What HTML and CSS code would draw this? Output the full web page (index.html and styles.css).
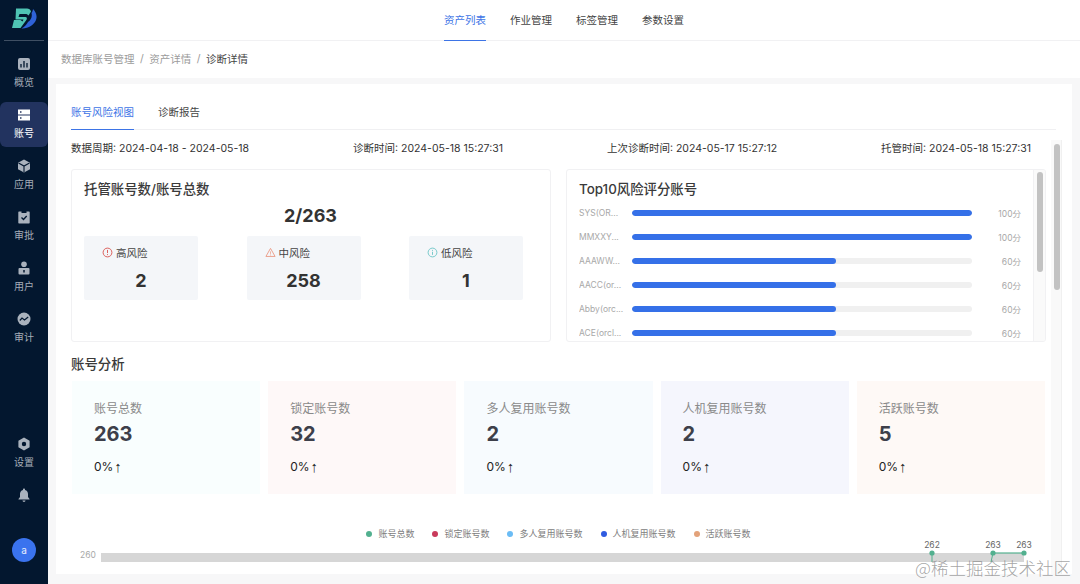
FILE: index.html
```html
<!DOCTYPE html>
<html lang="zh">
<head>
<meta charset="utf-8">
<title>诊断详情</title>
<link rel="stylesheet" href="styles.css">
</head>
<body>
<div class="app">
  <aside class="side">
    <div class="logo">
      <svg width="26" height="24" viewBox="0 0 26 24">
        <path d="M5 1.500H16C18 1.500 19.500 2.500 20 4.500L17.500 8.500C16.500 7.500 16 7 14.500 7H8.500L7.500 10H14.500C16 10 16.500 12 15 13.500L9.500 21H1L3 13H9.500L11.500 14.500L12.500 12.500H4.500Z" fill="#4fc4b4"/>
        <path d="M20.500 6C21.500 4.500 22 3 22 2C25 5 26.500 9 25 13C23 18 17 22 10.500 21.500C14 19.500 16 17 17 15C20 13 21.500 9.500 20.500 6Z" fill="#2f62d8"/>
      </svg>
    </div>
    <nav class="side-nav">
      <a class="side-item">
        <svg class="si" viewBox="0 0 14 14"><rect x="1" y="1" width="12" height="12" rx="2" fill="#aab2bd"/><path d="M4 7v3.500M7 4v6.500M10 6v4.500" stroke="#03172f" stroke-width="1.300"/></svg>
        <span>概览</span>
      </a>
      <a class="side-item active">
        <svg class="si" viewBox="0 0 14 14"><path d="M1 1.500h12v5H1zM1 7.500h12v5H1z" fill="#fff"/><path d="M3 4h1.500M3 10h1.500" stroke="#26365f" stroke-width="1.400"/></svg>
        <span>账号</span>
      </a>
      <a class="side-item">
        <svg class="si" viewBox="0 0 14 14"><path d="M7 .5l6 3.300v6.400L7 13.500 1 10.200V3.800z" fill="#aab2bd"/><path d="M1.500 4L7 7l5.500-3M7 7v6" stroke="#03172f" stroke-width="1.100" fill="none"/></svg>
        <span>应用</span>
      </a>
      <a class="side-item">
        <svg class="si" viewBox="0 0 14 14"><path d="M2 1.500h2.500V3h5V1.500H12a.7.7 0 0 1 .7.7v10.600a.7.7 0 0 1-.7.7H2a.7.7 0 0 1-.7-.7V2.200a.7.7 0 0 1 .7-.7z" fill="#aab2bd"/><path d="M4.500 7.500l2 2 3.200-3.500" stroke="#03172f" stroke-width="1.300" fill="none"/></svg>
        <span>审批</span>
      </a>
      <a class="side-item">
        <svg class="si" viewBox="0 0 14 14"><circle cx="7" cy="3.300" r="2.800" fill="#aab2bd"/><rect x="1.500" y="7" width="11" height="6.500" rx="1" fill="#aab2bd"/><path d="M7 9v2.500" stroke="#03172f" stroke-width="1.500"/></svg>
        <span>用户</span>
      </a>
      <a class="side-item">
        <svg class="si" viewBox="0 0 14 14"><circle cx="7" cy="7" r="6.500" fill="#aab2bd"/><path d="M2.800 8.500L5 6l2.500 2L11.200 5" stroke="#03172f" stroke-width="1.200" fill="none"/></svg>
        <span>审计</span>
      </a>
    </nav>
    <div class="side-foot">
      <a class="side-item">
        <svg class="si" viewBox="0 0 14 14"><path fill-rule="evenodd" d="M7 .5l5.600 3.200v6.600L7 13.500l-5.600-3.200V3.700zM7 4.800a2.200 2.200 0 1 0 0 4.400 2.200 2.200 0 0 0 0-4.400z" fill="#aab2bd"/></svg>
        <span>设置</span>
      </a>
      <svg class="bell" viewBox="0 0 14 14"><path d="M7 .5c.6 0 1 .4 1 1v.4c2 .5 3 2.200 3 4.100v3l1.500 2v.5h-11V11L3 9V6c0-1.900 1-3.600 3-4.100v-.4c0-.6.4-1 1-1zM5.500 12.600h3C8.500 13.400 7.800 14 7 14s-1.500-.6-1.500-1.400z" fill="#aab2bd"/></svg>
      <div class="avatar">a</div>
    </div>
  </aside>

  <div class="main">
    <header class="topnav">
      <a class="top-link current">资产列表</a>
      <a class="top-link">作业管理</a>
      <a class="top-link">标签管理</a>
      <a class="top-link">参数设置</a>
    </header>
    <div class="crumbs">
      <span class="crumb">数据库账号管理</span><i class="sep">/</i>
      <span class="crumb">资产详情</span><i class="sep">/</i>
      <span class="crumb last">诊断详情</span>
    </div>
    <div class="page">
      <section class="panel">
        <div class="tabs">
          <a class="tab current">账号风险视图</a>
          <a class="tab">诊断报告</a>
        </div>
        <div class="info">
          <span>数据周期: 2024-04-18 - 2024-05-18</span>
          <span>诊断时间: 2024-05-18 15:27:31</span>
          <span>上次诊断时间: 2024-05-17 15:27:12</span>
          <span>托管时间: 2024-05-18 15:27:31</span>
        </div>
        <div class="cards">
          <div class="card">
            <h3 class="card-title">托管账号数/账号总数</h3>
            <div class="ratio">2/263</div>
            <div class="risks">
              <div class="risk">
                <div class="risk-label">
                  <svg class="ri" viewBox="0 0 12 12"><circle cx="6" cy="6" r="4.800" fill="none" stroke="#d9534f"/><path d="M6 3.200v3.400M6 7.800v1" stroke="#d9534f"/></svg>高风险
                </div>
                <div class="risk-num">2</div>
              </div>
              <div class="risk">
                <div class="risk-label">
                  <svg class="ri" viewBox="0 0 12 12"><path d="M6 1.500l5 8.800H1z" fill="none" stroke="#ea9a85"/><path d="M6 4.800v2.700M6 8.200v1" stroke="#ea9a85" stroke-width=".8"/></svg>中风险
                </div>
                <div class="risk-num">258</div>
              </div>
              <div class="risk">
                <div class="risk-label">
                  <svg class="ri" viewBox="0 0 12 12"><circle cx="6" cy="6" r="4.800" fill="none" stroke="#6cc5c6"/><path d="M6 3.200v1M6 5.200v3.400" stroke="#6cc5c6"/></svg>低风险
                </div>
                <div class="risk-num">1</div>
              </div>
            </div>
          </div>
          <div class="card top-card">
            <h3 class="card-title">Top10风险评分账号</h3>
            <div class="rows">
              <div class="row"><span class="row-name">SYS(OR...</span><div class="track"><div class="fill" style="width:100%"></div></div><span class="row-val">100分</span></div>
              <div class="row"><span class="row-name">MMXXY...</span><div class="track"><div class="fill" style="width:100%"></div></div><span class="row-val">100分</span></div>
              <div class="row"><span class="row-name">AAAWW...</span><div class="track"><div class="fill" style="width:60%"></div></div><span class="row-val">60分</span></div>
              <div class="row"><span class="row-name">AACC(or...</span><div class="track"><div class="fill" style="width:60%"></div></div><span class="row-val">60分</span></div>
              <div class="row"><span class="row-name">Abby(orc...</span><div class="track"><div class="fill" style="width:60%"></div></div><span class="row-val">60分</span></div>
              <div class="row"><span class="row-name">ACE(orcl...</span><div class="track"><div class="fill" style="width:60%"></div></div><span class="row-val">60分</span></div>
            </div>
            <div class="inner-scroll"><div class="inner-thumb"></div></div>
          </div>
        </div>
        <h3 class="section-title">账号分析</h3>
        <div class="tiles">
          <div class="tile t1"><div class="tile-label">账号总数</div><div class="tile-num">263</div><div class="tile-rate">0%<span class="arrow">↑</span></div></div>
          <div class="tile t2"><div class="tile-label">锁定账号数</div><div class="tile-num">32</div><div class="tile-rate">0%<span class="arrow">↑</span></div></div>
          <div class="tile t3"><div class="tile-label">多人复用账号数</div><div class="tile-num">2</div><div class="tile-rate">0%<span class="arrow">↑</span></div></div>
          <div class="tile t4"><div class="tile-label">人机复用账号数</div><div class="tile-num">2</div><div class="tile-rate">0%<span class="arrow">↑</span></div></div>
          <div class="tile t5"><div class="tile-label">活跃账号数</div><div class="tile-num">5</div><div class="tile-rate">0%<span class="arrow">↑</span></div></div>
        </div>
        <div class="legend">
          <span class="lg"><i class="dot d1"></i>账号总数</span>
          <span class="lg"><i class="dot d2"></i>锁定账号数</span>
          <span class="lg"><i class="dot d3"></i>多人复用账号数</span>
          <span class="lg"><i class="dot d4"></i>人机复用账号数</span>
          <span class="lg"><i class="dot d5"></i>活跃账号数</span>
        </div>
        <svg class="chart" width="975" height="36" viewBox="71 538 975 36">
          <rect x="101" y="553" width="923" height="9" fill="#d6d6d6"/>
          <text x="80" y="558" class="axis">260</text>
          <path d="M993 553H1024" stroke="#52b08f" stroke-width="1.200"/>
          <path d="M932 553V562M993 553L991 562" stroke="#52b08f" stroke-width="1"/>
          <circle cx="932" cy="553" r="2.600" fill="#52b08f"/>
          <circle cx="993" cy="553" r="2.600" fill="#52b08f"/>
          <circle cx="1024" cy="553" r="2.600" fill="#52b08f"/>
          <text x="932" y="548" class="pt">262</text>
          <text x="993" y="548" class="pt">263</text>
          <text x="1024" y="548" class="pt">263</text>
        </svg>
        <div class="page-scroll"><div class="page-thumb"></div></div>
      </section>
    </div>
  </div>
</div>
<div class="watermark">@稀土掘金技术社区</div>
</body>
</html>
```

FILE: styles.css
```css
* { box-sizing: border-box; }
html, body { margin: 0; height: 100%; overflow: hidden; }
body {
  font-family: "Inter", "Noto Sans CJK SC", sans-serif;
  font-size: 10.5px;
  color: #333;
  background: #f7f7f8;
}
.app { display: flex; width: 1080px; height: 584px; }

/* sidebar */
.side {
  width: 48px;
  flex: none;
  background: #03172f;
  display: flex;
  flex-direction: column;
  align-items: center;
}
.logo {
  width: 40px;
  height: 41px;
  border-bottom: 1px solid #3f4f63;
  display: flex;
  align-items: flex-start;
  justify-content: center;
  padding-top: 7px;
}
.side-nav { display: flex; flex-direction: column; gap: 6px; padding-top: 10px; width: 100%; }
.side-item {
  height: 45px;
  width: 100%;
  padding-bottom: 2px;
  display: flex;
  flex-direction: column;
  align-items: center;
  justify-content: center;
  gap: 4px;
  color: #a5adb8;
  font-size: 10px;
  line-height: 14px;
  border-radius: 6px;
}
.side-item.active { background: #22335f; color: #fff; }
.si { width: 14px; height: 14px; display: block; }
.side-foot {
  margin-top: auto;
  width: 100%;
  display: flex;
  flex-direction: column;
  align-items: center;
  padding-bottom: 22px;
}
.bell { width: 14px; height: 14px; display: block; margin-top: 12px; }
.avatar {
  width: 24px;
  height: 24px;
  margin-top: 36px;
  border-radius: 50%;
  background: #3a73ee;
  color: #e8eefc;
  font-size: 10px;
  display: flex;
  align-items: center;
  justify-content: center;
}

/* top */
.main { flex: 1; min-width: 0; display: flex; flex-direction: column; }
.topnav {
  height: 41px;
  flex: none;
  background: #fff;
  border-bottom: 1px solid #f1f1f3;
  display: flex;
  justify-content: center;
  gap: 24px;
}
.top-link {
  height: 41px;
  line-height: 41px;
  color: #444;
  white-space: nowrap;
}
.top-link.current { color: #3d74e6; border-bottom: 1px solid #3d74e6; }
.crumbs {
  height: 37px;
  flex: none;
  background: #fff;
  padding: 0 0 2px 13px;
  display: flex;
  align-items: center;
}
.crumb { color: #9b9b9b; }
.crumb.last { color: #444; }
.sep { color: #9b9b9b; font-style: normal; margin: 0 5.500px; }

/* panel */
.page { flex: 1; min-height: 0; padding: 6px 8px 10px 8px; }
.panel {
  position: relative;
  height: 100%;
  background: #fff;
  padding: 0 26px 0 15px;
  overflow: hidden;
}
.tabs {
  height: 46px;
  margin-right: -10px;
  border-bottom: 1px solid #f0f0f2;
  display: flex;
  gap: 24px;
}
.tab { height: 46px; line-height: 57px; color: #444; white-space: nowrap; }
.tab.current { color: #3d74e6; border-bottom: 1px solid #3d74e6; }
.info {
  height: 35px;
  margin-bottom: 4px;
  width: 960px;
  display: flex;
  justify-content: space-between;
  align-items: center;
  color: #333;
}
.cards { display: flex; gap: 15px; }
.card {
  position: relative;
  width: 480px;
  height: 173px;
  overflow: hidden;
  border: 1px solid #f1f1f3;
  border-radius: 3px;
  padding: 0 12px;
}
.card-title {
  margin: 0;
  height: 38px;
  line-height: 38px;
  font-size: 13.400px;
  font-weight: 500;
  color: #3a3a3a;
}
.ratio {
  text-align: center;
  font-size: 18px;
  font-weight: 700;
  line-height: 24px;
  height: 26px;
  margin-top: -4px;
  color: #333;
  padding-right: 1px;
}
.risks { display: flex; justify-content: space-between; margin-top: 6px; padding-right: 15px; }
.risk { width: 114px; height: 64px; background: #f4f6f9; border-radius: 2px; }
.risk-label {
  height: 34px;
  padding: 0 0 2px 18px;
  display: flex;
  align-items: center;
  gap: 3px;
  color: #444;
  white-space: nowrap;
}
.ri { width: 11px; height: 11px; flex: none; }
.risk-num { text-align: center; font-size: 18px; font-weight: 700; line-height: 22px; color: #333; }

.top-card { padding-right: 0; }
.rows { display: flex; flex-direction: column; gap: 8px; margin-top: -3px; }
.row { display: flex; align-items: center; height: 16px; }
.row-name { width: 53px; flex: none; color: #a8a8a8; font-size: 8.500px; white-space: nowrap; overflow: hidden; }
.track { width: 340px; height: 6px; flex: none; background: #f0f0f0; border-radius: 3px; overflow: hidden; }
.fill { height: 100%; background: #3570e8; border-radius: 3px; }
.row-val { width: 49px; flex: none; text-align: right; color: #a8a8a8; font-size: 8.500px; white-space: nowrap; }
.inner-scroll {
  position: absolute;
  right: 0;
  top: 0;
  bottom: 0;
  width: 12px;
  background: #fafafa;
  border-left: 1px solid #f1f1f3;
}
.inner-thumb { width: 6px; height: 100px; margin: 2px 0 0 3px; background: #c2c2c2; border-radius: 3px; }

.section-title {
  margin: 0;
  height: 39px;
  line-height: 45px;
  font-size: 13.400px;
  font-weight: 500;
  color: #3a3a3a;
}
.tiles { display: flex; gap: 8px; padding-left: 1px; }
.tile { width: 188.200px; height: 113px; padding: 20px 22px 0; }
.t1 { background: #f9fefe; }
.t2 { background: #fef8f8; }
.t3 { background: #f7fbfe; }
.t4 { background: #f5f6fd; }
.t5 { background: #fef9f6; }
.tile-label { font-size: 12px; line-height: 16px; color: #8a8a8a; white-space: nowrap; }
.tile-num { font-size: 20px; font-weight: 700; line-height: 26px; margin-top: 4px; color: #3d3f4a; }
.tile-rate { display: flex; align-items: center; font-size: 12px; line-height: 16px; margin-top: 12px; color: #222; }
.arrow { font-family: "Liberation Sans", sans-serif; font-size: 15px; line-height: 16px; margin-left: 1px; }

.legend {
  height: 44px;
  padding-top: 35px;
  display: flex;
  justify-content: center;
  gap: 18px;
  font-size: 9px;
  line-height: 14px;
  color: #808080;
}
.lg { display: flex; align-items: center; gap: 6px; white-space: nowrap; }
.dot { width: 6px; height: 6px; border-radius: 50%; display: block; }
.d1 { background: #52b08f; }
.d2 { background: #c93a5b; }
.d3 { background: #6bbcf5; }
.d4 { background: #2f5be0; }
.d5 { background: #e3a27a; }
.chart { display: block; }
.axis { font-size: 8.500px; fill: #a8a8a8; font-family: "Inter", sans-serif; }
.pt { font-size: 8.500px; fill: #666; text-anchor: middle; font-family: "Inter", sans-serif; }

.page-scroll {
  position: absolute;
  right: 10px;
  top: 56px;
  bottom: 0;
  width: 11px;
  background: #f9f9f9;
  border-right: 1px solid #f0f0f0;
}
.page-thumb { width: 6px; height: 146px; margin: 4px 0 0 3px; background: #c2c2c2; border-radius: 3px; }

.watermark {
  position: absolute;
  left: 915px;
  top: 556px;
  font-family: "Noto Sans CJK SC", sans-serif;
  font-size: 17.500px;
  font-weight: 300;
  line-height: 24px;
  color: rgba(110, 110, 110, .62);
  white-space: nowrap;
}
```
